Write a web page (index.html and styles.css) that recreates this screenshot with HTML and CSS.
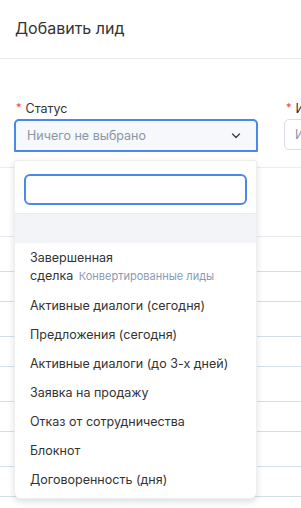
FILE: index.html
```html
<!DOCTYPE html>
<html lang="ru">
<head>
    <meta charset="UTF-8">
    <meta name="viewport" content="width=device-width, initial-scale=1.0">
    <title>Добавить лид</title>
    <link rel="stylesheet" href="styles.css">
</head>
<body>
    <div class="modal">
        <div class="modal-header">
            <h1>Добавить лид</h1>
        </div>

        <div class="modal-body">
            <div class="fields-row">
                <div class="field field-status">
                    <label class="field-label"><span class="req">*</span>Статус</label>
                    <div class="select open">
                        <span class="select-placeholder">Ничего не выбрано</span>
                        <svg class="chevron" width="10" height="6" viewBox="0 0 10 6">
                            <path d="M1.5 1l3.5 3.5 3.5-3.5" fill="none" stroke="#444" stroke-width="1.4" stroke-linecap="round" stroke-linejoin="round"/>
                        </svg>
                    </div>

                    <div class="dropdown">
                        <div class="dropdown-search">
                            <input type="text" class="search-input">
                        </div>
                        <ul class="options">
                            <li class="option option-empty"></li>
                            <li class="option option-double">Завершенная<br>сделка <small>Конвертированные лиды</small></li>
                            <li class="option">Активные диалоги (сегодня)</li>
                            <li class="option">Предложения (сегодня)</li>
                            <li class="option">Активные диалоги (до 3-х дней)</li>
                            <li class="option">Заявка на продажу</li>
                            <li class="option">Отказ от сотрудничества</li>
                            <li class="option">Блокнот</li>
                            <li class="option">Договоренность (дня)</li>
                        </ul>
                    </div>
                </div>

                <div class="field field-name">
                    <label class="field-label"><span class="req">*</span>Имя</label>
                    <input type="text" class="form-input" placeholder="Имя">
                </div>
            </div>
        </div>

        <div class="rows">
            <div class="row row-tall"></div>
            <div class="row"></div>
            <div class="row row-short"></div>
            <div class="row"></div>
            <div class="row row-short"></div>
            <div class="row"></div>
            <div class="row row-short"></div>
            <div class="row"></div>
            <div class="row row-short"></div>
        </div>
    </div>
</body>
</html>
```

FILE: styles.css
```css
* {
    margin: 0;
    padding: 0;
    box-sizing: border-box;
}
body {
    font-family: 'Inter', 'Noto Sans', sans-serif;
    background: #fff;
    color: #333;
    width: 301px;
    height: 508px;
    overflow: hidden;
}
.modal {
    width: 301px;
}
.modal-header {
    height: 59px;
    padding: 18px 15px 0;
    border-bottom: 1px solid #e8e8e8;
}
.modal-header h1 {
    font-size: 16px;
    font-weight: 400;
    line-height: 20px;
    color: #333;
}
.modal-body {
    padding: 40px 14px 15px;
    border-bottom: 1px solid #ececec;
}
.fields-row {
    display: flex;
    gap: 26px;
}
.field {
    flex: none;
}
.field-status {
    width: 244px;
    position: relative;
}
.field-name {
    width: 200px;
}
.field-label {
    display: block;
    font-size: 12.5px;
    line-height: 16px;
    height: 16px;
    margin-bottom: 4px;
    color: #333;
}
.req {
    color: #e5484d;
    font-size: 11px;
    margin: 0 4px 0 2px;
    vertical-align: 2px;
}
.select {
    height: 33px;
    border: 2px solid #4a88ec;
    border-radius: 5px;
    background: #f6f8fb;
    display: flex;
    align-items: center;
    justify-content: space-between;
    padding: 0 15px 0 11px;
}
.select.open {
    border-bottom-left-radius: 1px;
    border-bottom-right-radius: 1px;
}
.select-placeholder {
    font-size: 12.5px;
    color: #8c96a6;
}
.chevron {
    display: block;
}
.form-input {
    width: 100%;
    height: 31px;
    border: 1px solid #d8dde6;
    border-radius: 5px;
    padding: 0 10px;
    font-family: inherit;
    font-size: 12.5px;
    outline: none;
}
.form-input::placeholder {
    color: #8c96a6;
}
.dropdown {
    position: absolute;
    top: 61px;
    left: 0;
    width: 243px;
    background: #fff;
    border: 1px solid #eceef1;
    border-radius: 2px 2px 7px 7px;
    box-shadow: 0 3px 6px rgba(30, 40, 60, 0.15);
    padding-bottom: 4px;
    z-index: 10;
}
.dropdown-search {
    padding: 13px 9px 8px;
    border-bottom: 1px solid #e9ecf0;
}
.search-input {
    display: block;
    width: 100%;
    height: 31px;
    border: 2px solid #4a88ec;
    border-radius: 6px;
    outline: none;
    font-family: inherit;
    font-size: 13px;
    padding: 0 8px;
}
.options {
    list-style: none;
}
.option {
    font-size: 12.5px;
    line-height: 17px;
    padding: 6px 16px 6px 15px;
    color: #333;
}
.option small {
    font-size: 11px;
    color: #8b9ab4;
    margin-left: 2px;
}
.option-empty {
    height: 29px;
    background: #f2f4f7;
}
.option-double {
    line-height: 18px;
    padding-top: 6px;
    padding-bottom: 6px;
}
.rows {
    display: flex;
    flex-direction: column;
}
.row {
    height: 35px;
    border-bottom: 1px solid #d6ddea;
}
.row-short {
    height: 30px;
}
.row-tall {
    height: 69px;
    border-bottom-color: #e6e8ec;
}
```
